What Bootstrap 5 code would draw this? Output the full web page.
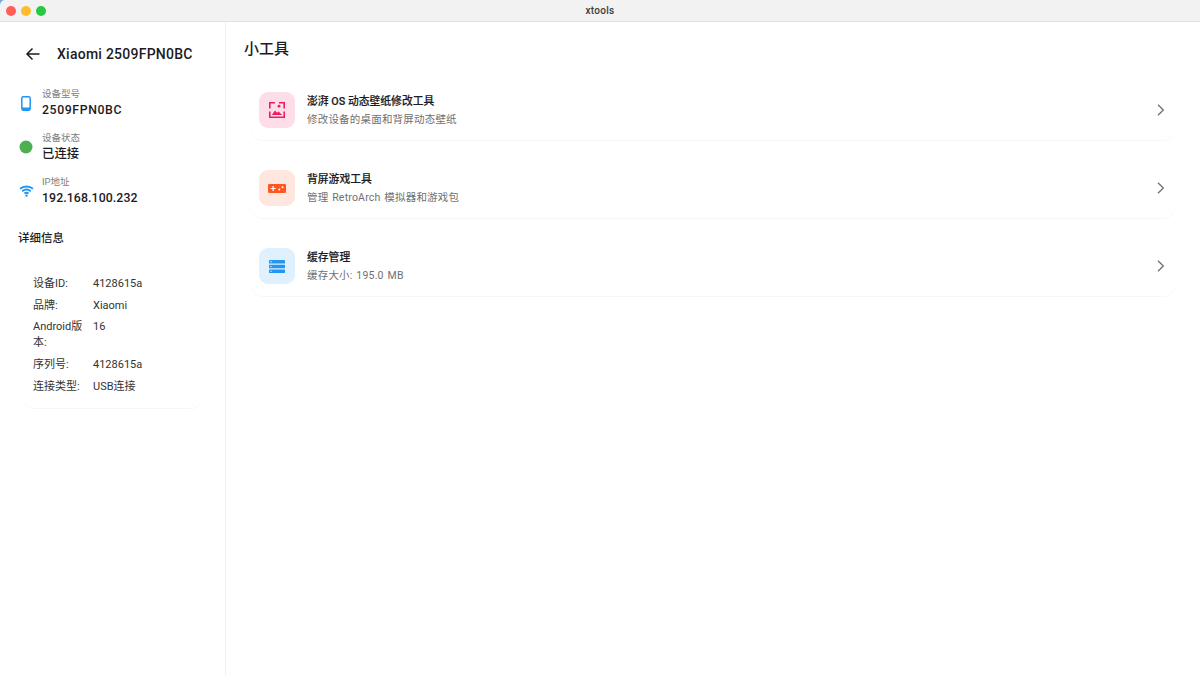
<!DOCTYPE html>
<html lang="zh">
<head>
<meta charset="utf-8">
<title>xtools</title>
<link href="https://cdn.jsdelivr.net/npm/bootstrap@5.3.0/dist/css/bootstrap.min.css" rel="stylesheet">
<style>
html,body{height:100%;}
body{font-family:Roboto,"Noto Sans CJK SC",sans-serif;color:#1c1b1f;background:#fff;overflow:hidden;}
.app-win{height:675px;width:1200px;background:#6aa7e0;}
.title-strip{height:22px;background:#f1f2f1;border-bottom:1px solid #e2e2e2;padding:0 6px;position:relative;border-top-left-radius:5px;}
.light{width:10px;height:10px;border-radius:50%;display:block;}
.light-r{background:#ff5f57}.light-y{background:#febc2e}.light-g{background:#28c840}
.lights{gap:5px;}
.win-name{position:absolute;left:0;right:0;top:0;line-height:21px;text-align:center;font-size:10px;font-weight:500;color:#3a3a3a;letter-spacing:.3px;}
.body-row{background:#fff;}
.side{width:226px;flex:none;border-right:1px solid #eeeeee;padding:0 18px;}
.side-head{height:59px;padding-top:5px;gap:16px;padding-left:7px;}
.side-head h1{font-size:14px;font-weight:500;margin:0;letter-spacing:.25px;line-height:20px;}
.info-row{height:44px;gap:8px;align-items:center;}
.info-ic{width:16px;display:flex;justify-content:center;flex:none;}
.info-txt{padding-top:2px;}
.info-lab{font-size:9.5px;line-height:13px;color:#7d7d7d;}
.info-val{font-size:12.3px;line-height:21px;font-weight:500;letter-spacing:.1px;}
.info-wide{letter-spacing:.6px;}
.detail-h{font-size:11.500px;font-weight:500;margin:16px 0 0;line-height:18px;}
.detail-box{margin:26px 4px 0 4px;padding:0 0 10px 11px;border-radius:12px;box-shadow:0 1px 1px rgba(0,0,0,.035);}
.d-row{display:flex;font-size:11px;line-height:16px;color:#333;padding:3px 0;}
.d-row:nth-child(2){padding-bottom:2px;}
.d-key{width:60px;flex:none;padding-right:8px;}
.main-area{padding:0 25px 0 18px;}
.main-h{font-size:15px;font-weight:500;margin:0;line-height:22px;padding-top:16px;}
.tool-list{margin-top:2px;}
.tool-item{height:78px;margin-left:7px;padding:18px 8px 0;border-radius:12px;box-shadow:0 1px 1px rgba(0,0,0,.035);gap:12px;align-items:center;}
.tool-ic{width:36px;height:36px;border-radius:9px;flex:none;display:flex;align-items:center;justify-content:center;}
.tone-a{background:#fcdde8}.tone-b{background:#ffe6de}.tone-c{background:#dff0fe}
.tool-txt{padding-top:2px;}
.tool-t{font-size:10.800px;font-weight:500;line-height:14px;color:#1c1b1f;-webkit-text-stroke:.15px #1c1b1f;}
.tool-s{font-size:10.500px;line-height:14px;color:#6f6f6f;margin-top:4px;letter-spacing:.2px;word-spacing:1px;}
.chev{margin-right:2px;}
</style>
</head>
<body>
<div class="app-win d-flex flex-column">
  <div class="title-strip d-flex align-items-center">
    <div class="lights d-flex"><span class="light light-r"></span><span class="light light-y"></span><span class="light light-g"></span></div>
    <div class="win-name">xtools</div>
  </div>
  <div class="body-row d-flex flex-grow-1">
    <aside class="side">
      <div class="side-head d-flex align-items-center">
        <svg width="16" height="16" viewBox="0 0 16 16" fill="none" stroke="#1c1b1f" stroke-width="1.5"><path d="M14.5 8H2M7.5 2.500 2 8l5.500 5.500"/></svg>
        <h1>Xiaomi 2509FPN0BC</h1>
      </div>
      <div>
        <div class="info-row d-flex">
          <div class="info-ic"><svg width="10" height="15" viewBox="0 0 10 15"><rect x=".8" y=".8" width="8.4" height="13.4" rx="1.6" fill="none" stroke="#2196f3" stroke-width="1.5"/><rect x="1" y="11.5" width="8" height="2.7" fill="#2196f3"/></svg></div>
          <div class="info-txt"><div class="info-lab">设备型号</div><div class="info-val info-wide">2509FPN0BC</div></div>
        </div>
        <div class="info-row d-flex">
          <div class="info-ic"><svg width="14" height="14" viewBox="0 0 14 14"><circle cx="7" cy="7" r="6.5" fill="#4caf50"/></svg></div>
          <div class="info-txt"><div class="info-lab">设备状态</div><div class="info-val">已连接</div></div>
        </div>
        <div class="info-row d-flex">
          <div class="info-ic"><svg width="15" height="12" viewBox="0 0 15 12" fill="none" stroke="#2196f3" stroke-width="1.8"><path d="M1 3.800C4.700.7 10.300.7 14 3.800M3.200 6.200c2.500-2 6.100-2 8.600 0M5.400 8.500c1.300-.9 2.900-.9 4.200 0"/><circle cx="7.500" cy="10.600" r="1.200" fill="#2196f3" stroke="none"/></svg></div>
          <div class="info-txt"><div class="info-lab">IP地址</div><div class="info-val">192.168.100.232</div></div>
        </div>
      </div>
      <h2 class="detail-h">详细信息</h2>
      <div class="detail-box">
        <div class="d-row"><div class="d-key">设备ID:</div><div>4128615a</div></div>
        <div class="d-row"><div class="d-key">品牌:</div><div>Xiaomi</div></div>
        <div class="d-row"><div class="d-key">Android版本:</div><div>16</div></div>
        <div class="d-row"><div class="d-key">序列号:</div><div>4128615a</div></div>
        <div class="d-row"><div class="d-key">连接类型:</div><div>USB连接</div></div>
      </div>
    </aside>
    <main class="main-area flex-grow-1">
      <h2 class="main-h">小工具</h2>
      <div class="tool-list">
        <div class="tool-item d-flex">
          <div class="tool-ic tone-a"><svg width="16" height="16" viewBox="0 0 16 16" fill="none" stroke="#e91e63" stroke-width="1.6"><path d="M.8 6.500V.8H6M10 .8h5.200v5.700M15.200 9.500v5.700H.8V9.500"/><circle cx="10" cy="4.200" r="1.400" fill="#e91e63" stroke="none"/><path d="M2.800 13 6 8.500l2 2.200 1.500-1.300 3.700 3.600z" fill="#e91e63" stroke="none"/></svg></div>
          <div class="tool-txt flex-grow-1"><div class="tool-t">澎湃 OS 动态壁纸修改工具</div><div class="tool-s">修改设备的桌面和背屏动态壁纸</div></div>
          <svg class="chev" width="8" height="12" viewBox="0 0 8 12" fill="none" stroke="#757575" stroke-width="1.4"><path d="M1 .8 6.300 6 1 11.200"/></svg>
        </div>
        <div class="tool-item d-flex">
          <div class="tool-ic tone-b"><svg width="18" height="9" viewBox="0 0 18 9"><rect width="18" height="9" rx="1.2" fill="#ff5722"/><path d="M2.600 3.900h1.900V2h1.200v1.900h1.900v1.200H5.700V7H4.500V5.100H2.600z" fill="#fff"/><circle cx="11.300" cy="5.600" r="1" fill="#fff"/><circle cx="14.500" cy="3.200" r="1" fill="#fff"/></svg></div>
          <div class="tool-txt flex-grow-1"><div class="tool-t">背屏游戏工具</div><div class="tool-s">管理 RetroArch 模拟器和游戏包</div></div>
          <svg class="chev" width="8" height="12" viewBox="0 0 8 12" fill="none" stroke="#757575" stroke-width="1.4"><path d="M1 .8 6.300 6 1 11.200"/></svg>
        </div>
        <div class="tool-item d-flex">
          <div class="tool-ic tone-c"><svg width="16" height="13" viewBox="0 0 16 13"><rect width="16" height="3.600" rx=".4" fill="#2196f3"/><rect y="4.700" width="16" height="3.600" rx=".4" fill="#2196f3"/><rect y="9.400" width="16" height="3.600" rx=".4" fill="#2196f3"/><circle cx="2" cy="1.800" r=".7" fill="#dff0fe"/><circle cx="2" cy="6.500" r=".7" fill="#dff0fe"/><circle cx="2" cy="11.200" r=".7" fill="#dff0fe"/></svg></div>
          <div class="tool-txt flex-grow-1"><div class="tool-t">缓存管理</div><div class="tool-s">缓存大小: 195.0 MB</div></div>
          <svg class="chev" width="8" height="12" viewBox="0 0 8 12" fill="none" stroke="#757575" stroke-width="1.4"><path d="M1 .8 6.300 6 1 11.200"/></svg>
        </div>
      </div>
    </main>
  </div>
</div>
<script src="https://cdn.jsdelivr.net/npm/bootstrap@5.3.0/dist/js/bootstrap.bundle.min.js"></script>
</body>
</html>
